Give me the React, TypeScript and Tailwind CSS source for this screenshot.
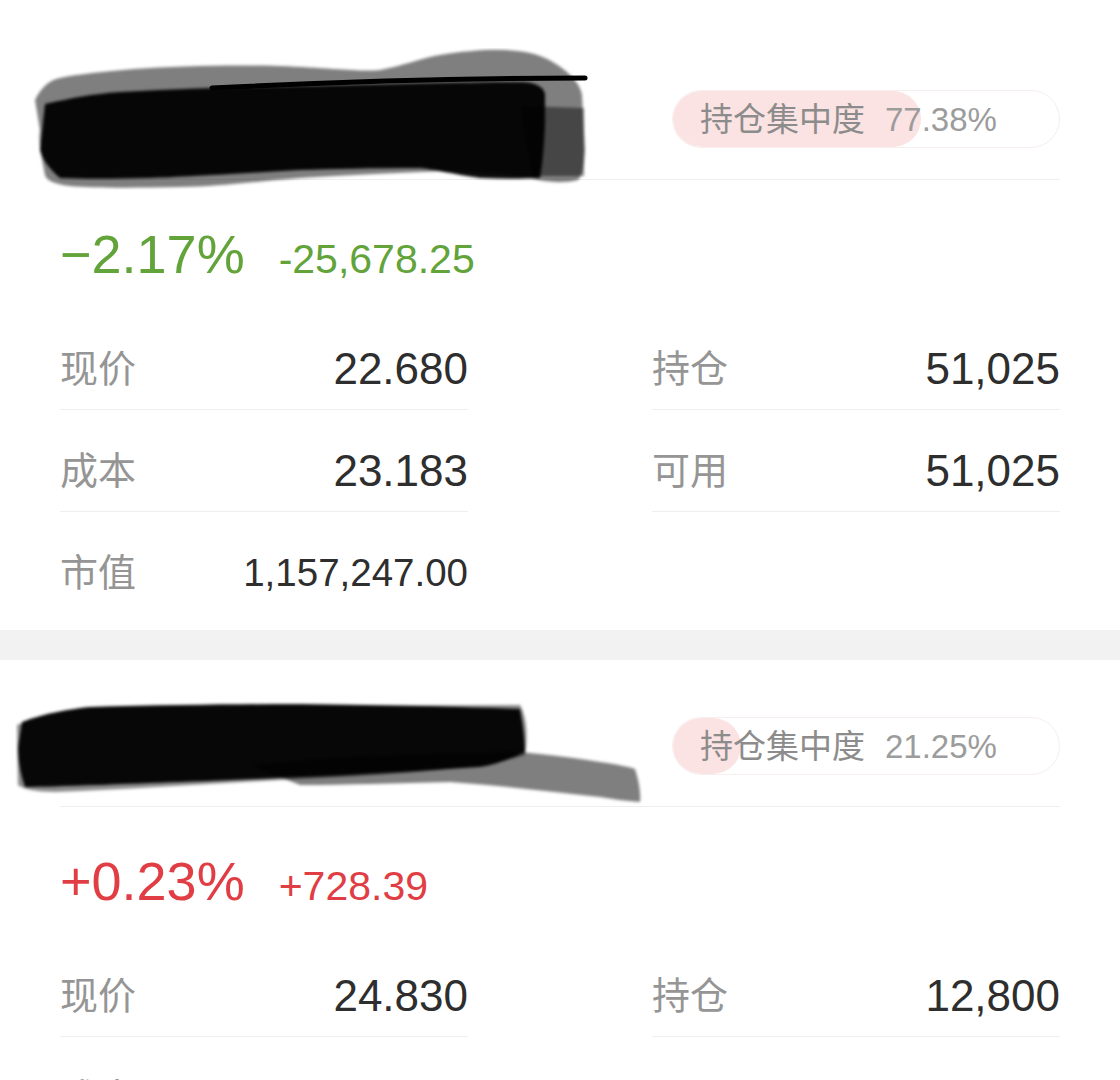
type Row = { label: string; value: string; small?: boolean };

type Holding = {
    concentration: number;
    pct: string;
    amount: string;
    up: boolean;
    left: Row[];
    right: Row[];
};

const holdings: Holding[] = [
    {
        concentration: 77.38,
        pct: '−2.17%',
        amount: '-25,678.25',
        up: false,
        left: [
            { label: '现价', value: '22.680' },
            { label: '成本', value: '23.183' },
            { label: '市值', value: '1,157,247.00', small: true },
        ],
        right: [
            { label: '持仓', value: '51,025' },
            { label: '可用', value: '51,025' },
        ],
    },
    {
        concentration: 21.25,
        pct: '+0.23%',
        amount: '+728.39',
        up: true,
        left: [
            { label: '现价', value: '24.830' },
            { label: '成本', value: '24.779' },
            { label: '市值', value: '317,824.00', small: true },
        ],
        right: [
            { label: '持仓', value: '12,800' },
            { label: '可用', value: '12,800' },
        ],
    },
];

function ScribbleOne() {
    return (
        <svg
            className="absolute left-[32px] top-[48px]"
            width="560"
            height="142"
            viewBox="0 0 560 142"
        >
            <defs>
                <filter id="soft1">
                    <feGaussianBlur stdDeviation="1.6" />
                </filter>
            </defs>
            <g filter="url(#soft1)">
                <path
                    d="M3 52 C 10 38 18 32 28 30 C 70 22 150 16 248 18 C 300 20 330 24 348 22 C 370 18 390 10 408 7 C 440 2 470 0 493 4 C 520 8 548 30 550 47 L 553 102 C 552 118 550 128 546 132 C 530 136 512 134 498 130 C 460 124 420 122 388 124 C 340 126 300 128 268 130 C 220 134 180 139 148 139 C 100 140 60 140 38 138 C 22 136 14 132 13 127 C 10 110 6 96 8 82 Z"
                    fill="#000"
                    fillOpacity="0.5"
                />
                <path
                    d="M13 56 C 40 50 60 46 88 44 C 160 40 220 39 268 38 C 360 36 430 34 488 34 C 505 34 512 40 513 46 L 513 76 C 512 100 510 120 508 130 C 490 131 468 131 448 130 C 420 126 400 121 388 120 C 340 120 300 121 268 122 C 200 126 150 129 118 130 C 80 131 50 131 28 130 C 16 120 10 110 8 102 Z"
                    fill="#000"
                    fillOpacity="0.95"
                />
                <path
                    d="M488 58 L 552 60 L 552 128 L 500 128 Z"
                    fill="#000"
                    fillOpacity="0.45"
                />
            </g>
            <path
                d="M180 40 C 300 34 420 30 553 30"
                stroke="#000"
                strokeWidth="5"
                strokeLinecap="round"
                fill="none"
            />
        </svg>
    );
}

function ScribbleTwo() {
    return (
        <svg
            className="absolute left-[15px] top-[37px]"
            width="630"
            height="112"
            viewBox="0 0 630 112"
        >
            <defs>
                <filter id="soft2">
                    <feGaussianBlur stdDeviation="1.6" />
                </filter>
            </defs>
            <g filter="url(#soft2)">
                <path
                    d="M235 68 C 300 62 340 59 385 58 C 440 56 480 55 505 55 C 540 58 565 62 585 65 C 605 68 615 70 620 72 C 624 84 626 96 625 105 C 610 104 598 102 585 100 C 530 94 480 88 435 85 C 380 86 330 88 285 88 Z"
                    fill="#000"
                    fillOpacity="0.5"
                />
                <path
                    d="M2 28 C 20 20 50 14 75 10 L 505 8 C 512 20 513 40 510 58 C 480 68 420 76 285 82 C 200 86 120 92 40 95 C 20 95 8 92 3 88 Z"
                    fill="#000"
                    fillOpacity="0.45"
                />
                <path
                    d="M7 25 C 30 16 55 12 75 10 C 150 8 220 7 285 7 C 380 8 450 10 505 12 C 508 28 510 42 510 55 C 495 62 480 68 465 70 C 400 74 340 78 285 80 C 200 84 130 86 85 88 C 50 89 25 90 10 90 C 5 76 3 62 3 50 Z"
                    fill="#000"
                    fillOpacity="0.95"
                />
            </g>
        </svg>
    );
}

function Concentration(props: { value: number }) {
    return (
        <div className="relative flex h-[58px] w-[388px] items-center overflow-hidden rounded-full border border-[#f7eeee]">
            <div
                className="absolute bottom-0 left-0 top-0 rounded-full bg-[#fce3e3]"
                style={{ width: `${(props.value / 100) * 320}px` }}
            />
            <span className="relative pl-[27px] text-[33px] leading-none text-[#8c8c8c]">
                持仓集中度
            </span>
            <span className="relative pl-[20px] text-[33px] leading-none text-[#9c9c9c]">
                {props.value.toFixed(2)}%
            </span>
        </div>
    );
}

function InfoRow(props: { row: Row; last?: boolean }) {
    return (
        <div
            className={`flex h-[102px] items-center justify-between pt-[20px] ${
                props.last ? '' : 'border-b border-[#eeeeee]'
            }`}
        >
            <span className="text-[38px] leading-none text-[#959595]">
                {props.row.label}
            </span>
            <span
                className={`leading-none text-[#2e2e2e] ${
                    props.row.small ? 'text-[38.5px]' : 'text-[44px]'
                }`}
            >
                {props.row.value}
            </span>
        </div>
    );
}

function HoldingCard(props: { data: Holding; first?: boolean }) {
    const d = props.data;
    const color = d.up ? 'text-[#e03e44]' : 'text-[#62a33a]';
    return (
        <div className={`relative bg-white px-[60px] ${props.first ? 'pb-[16px]' : ''}`}>
            <div
                className={`flex items-center justify-end border-b border-[#eeeeee] pb-[31px] ${
                    props.first ? 'pt-[90px]' : 'pt-[57px]'
                }`}
            >
                <Concentration value={d.concentration} />
            </div>
            {props.first ? <ScribbleOne /> : <ScribbleTwo />}

            <div className={`flex h-[128px] items-baseline gap-[34px] pt-[46px] ${color}`}>
                <span className="text-[54px] leading-[56px]">{d.pct}</span>
                <span className="text-[41px] leading-[56px]">{d.amount}</span>
            </div>

            <div className="grid grid-cols-2 gap-x-[184px]">
                <div>
                    {d.left.map((row, i) => (
                        <InfoRow key={i} row={row} last={i === d.left.length - 1} />
                    ))}
                </div>
                <div>
                    {d.right.map((row, i) => (
                        <InfoRow key={i} row={row} />
                    ))}
                </div>
            </div>
        </div>
    );
}

export default function App() {
    return (
        <div className="h-[1080px] w-[1120px] overflow-hidden bg-white font-['Liberation_Sans','Noto_Sans_CJK_SC',sans-serif]">
            <HoldingCard data={holdings[0]} first />
            <div className="h-[30px] bg-[#f2f2f2]" />
            <HoldingCard data={holdings[1]} />
        </div>
    );
}
